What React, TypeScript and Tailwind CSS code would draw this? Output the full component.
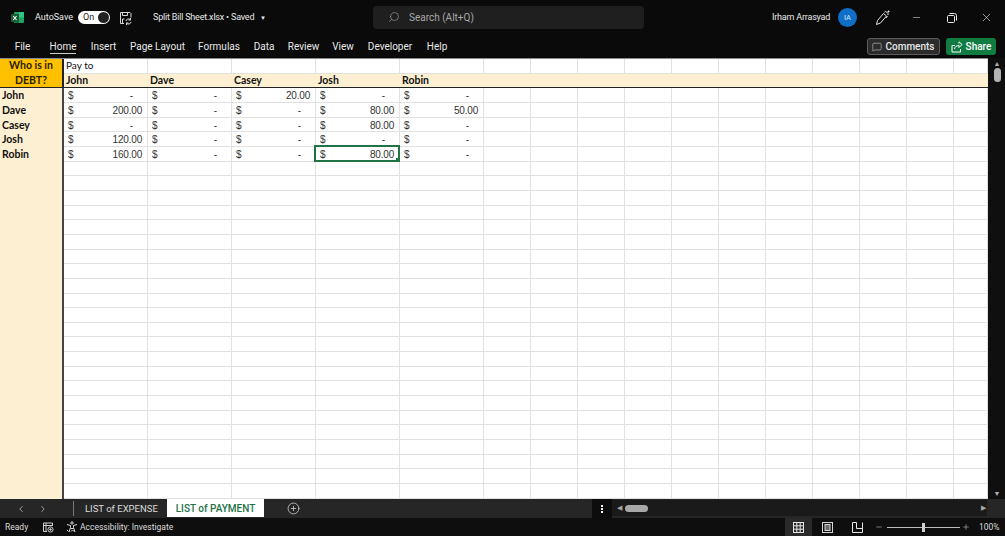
import React from 'react';
import { ChevronLeft, ChevronRight, Minus, MessageSquare, Plus, PlusCircle, Search, X } from 'lucide-react';

const uiFont = 'font-["Roboto","Noto_Sans",sans-serif]';
const sheetFont = 'font-["Lato",sans-serif]';

const tabs = [
  { label: 'File', width: 'w-[13px]' },
  { label: 'Home', width: 'w-[26px]', active: true },
  { label: 'Insert', width: 'w-[25px]' },
  { label: 'Page Layout', width: 'w-[53px]' },
  { label: 'Formulas', width: 'w-[40px]' },
  { label: 'Data', width: 'w-[20px]' },
  { label: 'Review', width: 'w-[29px]' },
  { label: 'View', width: 'w-[20px]' },
  { label: 'Developer', width: 'w-[44px]' },
  { label: 'Help', width: 'w-[20px]' },
];

const people = ['John', 'Dave', 'Casey', 'Josh', 'Robin'];

const payments: string[][] = [
  ['-', '-', '20.00', '-', '-'],
  ['200.00', '-', '-', '80.00', '50.00'],
  ['-', '-', '-', '80.00', '-'],
  ['120.00', '-', '-', '-', '-'],
  ['160.00', '-', '-', '80.00', '-'],
];

const cell = 'border-r border-b border-[#e1e1e1] min-w-0';
const extraCols = Array.from({ length: 11 });
const emptyRows = Array.from({ length: 23 });

function ExcelLogo() {
  return (
    <svg width="13" height="13" viewBox="0 0 13 13">
      <rect x="3" y="1" width="10" height="11" rx="1" fill="#21a366" />
      <rect x="8" y="1" width="5" height="5.5" fill="#33c481" />
      <rect x="3" y="6.5" width="5" height="5.5" fill="#107c41" />
      <rect x="0" y="3" width="8" height="8" rx="1" fill="#185c37" />
      <path d="M2.2 5 L5.6 9 M5.6 5 L2.2 9" stroke="#fff" strokeWidth="1.1" />
    </svg>
  );
}

function SaveIcon() {
  return (
    <svg width="13" height="14" viewBox="0 0 13 14" fill="none" stroke="#d8d8d8" strokeWidth="1">
      <path d="M5 12.5H1.5V1.5h9.5l1 1v4" />
      <path d="M3.5 1.5v3h5v-3M3.5 12v-4h2" />
      <path d="M7 10a2.5 2.5 0 0 1 4.5-1M12 11a2.5 2.5 0 0 1-4.5 1" />
      <path d="M11.5 7v2h-2M7.5 14v-2h2" />
    </svg>
  );
}

function PenIcon() {
  return (
    <svg width="16" height="16" viewBox="0 0 16 16" fill="none" stroke="#e6e6e6" strokeWidth="1">
      <path d="M1.5 14.5l1-4 6-7 3 2.5-6 7z" />
      <path d="M9.5 2.5l1-1.2 3 2.5-1 1.3M11 8l1.5-2" />
      <path d="M13.5 .5v2M12.5 1.5h2" />
    </svg>
  );
}

function RestoreIcon() {
  return (
    <svg width="10" height="10" viewBox="0 0 10 10" fill="none" stroke="#e8e8e8" strokeWidth="1">
      <rect x=".5" y="2.5" width="7" height="7" rx="1" />
      <path d="M2.5 .5h5a2 2 0 0 1 2 2v5" />
    </svg>
  );
}

function ShareIcon() {
  return (
    <svg width="12" height="12" viewBox="0 0 12 12" fill="none" stroke="#fff" strokeWidth="1">
      <path d="M4 4.5H1v6.5h8.5V8" />
      <path d="M3.5 8c.4-2.2 2.2-3.5 4.5-3.5V6.5L11 3.5 8 .8v1.8" />
    </svg>
  );
}

function MacroIcon() {
  return (
    <svg width="11" height="11" viewBox="0 0 11 11" fill="none" stroke="#cfcfcf" strokeWidth="1">
      <path d="M.5 1h9v3M.5 1v8.5H4M.5 3.5h9M3 1v8" />
      <circle cx="7.5" cy="7.5" r="2.6" />
      <circle cx="7.5" cy="7.5" r="0.8" fill="#cfcfcf" />
    </svg>
  );
}

function AccessibilityIcon() {
  return (
    <svg width="12" height="12" viewBox="0 0 12 12" fill="none" stroke="#dcdcdc" strokeWidth="1">
      <circle cx="6" cy="2" r="1.2" />
      <path d="M1 3.5l3.5 1v2L3 11M11 3.5l-3.5 1v2L9 11M4.5 7.5h3" />
      <path d="M1 9l1.5 1.5M5 10.5l1.5-1.5 1.5 1.5" />
    </svg>
  );
}

function GridViewIcon() {
  return (
    <svg width="11" height="11" viewBox="0 0 11 11" fill="none" stroke="#e6e6e6" strokeWidth="1">
      <rect x=".5" y=".5" width="10" height="10" />
      <path d="M3.8 .5v10M7.2 .5v10M.5 3.8h10M.5 7.2h10" />
    </svg>
  );
}

function PageViewIcon() {
  return (
    <svg width="11" height="11" viewBox="0 0 11 11" fill="none" stroke="#d6d6d6" strokeWidth="1">
      <rect x=".5" y=".5" width="10" height="10" />
      <rect x="3" y="2.5" width="5" height="6" fill="#6a6a6a" />
    </svg>
  );
}

function BreakViewIcon() {
  return (
    <svg width="11" height="11" viewBox="0 0 11 11" fill="none" stroke="#e6e6e6" strokeWidth="1">
      <path d="M.5 .5v10h10V.5M.5 .5h4v6h6" />
    </svg>
  );
}

function TitleBar() {
  return (
    <div className="h-[34px] flex items-center pl-[11px] pt-[1px] text-[#e8e8e8] text-[9px] shrink-0">
      <ExcelLogo />
      <span className="ml-[11px] w-[37px] whitespace-nowrap">AutoSave</span>
      <div className="ml-[6px] w-[32px] h-[13px] rounded-full bg-white flex items-center justify-between pl-[5px] pr-[1px] text-[#222] text-[9px]">
        <span>On</span>
        <span className="w-[11px] h-[11px] rounded-full bg-[#222]" />
      </div>
      <div className="ml-[9px] flex"><SaveIcon /></div>
      <span className="ml-[21px] w-[102px] whitespace-nowrap tracking-[-0.2px]">Split Bill Sheet.xlsx • Saved</span>
      <span className="ml-[5px] w-[6px] text-[6px]">▼</span>
      <div className="ml-[107px] w-[271px] h-[23px] -mt-[1px] rounded bg-[#1f1f1f] flex items-center pl-[15px] text-[#a8a8a8] text-[10px]">
        <Search size={12} strokeWidth={1.2} className="-scale-x-100" />
        <span className="ml-[9px]">Search (Alt+Q)</span>
      </div>
      <span className="ml-[128px] w-[59px] whitespace-nowrap tracking-[-0.2px]">Irham Arrasyad</span>
      <div className="ml-[7px] w-[19px] h-[19px] rounded-full bg-[#0f6fc6] flex items-center justify-center text-[7.5px] text-[#d8e8f8]">IA</div>
      <div className="ml-[18px] flex"><PenIcon /></div>
      <Minus size={11} strokeWidth={1.2} className="ml-[20px]" />
      <div className="ml-[25px] flex"><RestoreIcon /></div>
      <X size={13} strokeWidth={1.2} className="ml-[23px]" />
    </div>
  );
}

function Ribbon() {
  return (
    <div className="h-[24px] flex items-center pl-[16px] pr-[9px] text-[#e8e8e8] text-[10px] shrink-0">
      <div className="flex gap-[15px] h-full">
        {tabs.map((t, i) => (
          <div
            key={t.label}
            className={`${t.width} ${i === 1 ? 'ml-[6px] border-b border-[#cfcfcf]' : ''} h-[20px] pt-[6px] whitespace-nowrap flex justify-center leading-[14px]`}
          >
            {t.label}
          </div>
        ))}
      </div>
      <div className="ml-auto flex gap-[6px] mt-[1px] font-medium">
        <div className="w-[73px] h-[17px] rounded-[3px] bg-[#2b2b2b] border border-[#5c5c5c] flex items-center justify-center gap-[3px]">
          <MessageSquare size={10} strokeWidth={1.2} />
          <span>Comments</span>
        </div>
        <div className="w-[50px] h-[17px] rounded-[3px] bg-[#107c41] flex items-center justify-center gap-[3px] text-white">
          <ShareIcon />
          <span>Share</span>
        </div>
      </div>
    </div>
  );
}

function Grid() {
  return (
    <div className={`${sheetFont} flex-1 min-w-0 bg-white overflow-hidden border-t border-[#8a8a8a] grid grid-cols-[64px_repeat(5,84px)_repeat(10,47px)_34px] auto-rows-[14.67px] text-[10.5px] text-[#111]`}>
      {/* Who is in DEBT merged cell */}
      <div className="row-span-2 bg-[#ffc000] border-r-2 border-b border-[#222] flex items-center justify-center text-center font-bold leading-[15px] text-[#2b2000]">
        Who is in
        <br />
        DEBT?
      </div>
      <div className={`${cell} pl-[2px] leading-[13px] text-[10px]`}>Pay to</div>
      {Array.from({ length: 15 }).map((_, i) => (
        <div key={i} className={cell} />
      ))}

      {people.map((p) => (
        <div key={p} className="bg-[#fdf0d2] border-b border-[#222] pl-[2px] font-bold leading-[13px]">{p}</div>
      ))}
      {extraCols.map((_, i) => (
        <div key={i} className="bg-[#fdf0d2] border-b border-[#222]" />
      ))}

      {people.map((p, r) => (
        <React.Fragment key={p}>
          <div className="bg-[#fdf0d2] border-r-2 border-[#444] pl-[2px] font-bold leading-[15px]">{p}</div>
          {payments[r].map((v, c) => (
            <div key={c} className={`${cell} relative font-["Liberation_Sans",sans-serif] text-[10px] tracking-[-0.2px] leading-[15px] text-[#333] flex justify-between pl-[4px] ${v === '-' ? 'pr-[14px]' : 'pr-[5px]'}`}>
              <span>$</span>
              <span>{v}</span>
              {r === 4 && c === 3 && (
                <div className="absolute -left-[2px] -top-[2px] -right-[1px] -bottom-[1px] z-10 border-2 border-[#217346]">
                  <div className="absolute -right-[2px] -bottom-[2px] w-[4px] h-[4px] bg-[#217346]" />
                </div>
              )}
            </div>
          ))}
          {extraCols.map((_, i) => (
            <div key={i} className={cell} />
          ))}
        </React.Fragment>
      ))}

      {emptyRows.map((_, r) => (
        <React.Fragment key={r}>
          <div className="bg-[#fdf0d2] border-r-2 border-[#444]" />
          {Array.from({ length: 16 }).map((_, i) => (
            <div key={i} className={cell} />
          ))}
        </React.Fragment>
      ))}
    </div>
  );
}

function VScrollbar() {
  return (
    <div className="w-[17px] shrink-0 bg-[#0f0f0f] flex flex-col items-center pt-[2px] pb-[1px] pl-[1px]">
      <span className="text-[7px] leading-[8px] text-[#b0b0b0]">▲</span>
      <div className="w-[7px] h-[14px] rounded-full bg-[#b4b4b4]" />
      <span className="mt-auto text-[7px] leading-[8px] text-[#b0b0b0]">▼</span>
    </div>
  );
}

function SheetTabs() {
  return (
    <div className="h-[19px] bg-[#262626] flex text-[9.5px] text-[#dcdcdc] shrink-0">
      <div className="w-[73px] flex items-center pl-[16px] gap-[12px] text-[#bdbdbd]">
        <ChevronLeft size={10} strokeWidth={2} />
        <ChevronRight size={10} strokeWidth={2} />
      </div>
      <div className="w-px h-[15px] mt-[2px] bg-[#777]" />
      <span className="ml-[11px] w-[71px] leading-[19px] whitespace-nowrap">LIST of EXPENSE</span>
      <div className="ml-[11px] w-[97px] h-[18px] bg-white text-[#217346] text-[10px] font-medium flex items-center justify-center whitespace-nowrap">LIST of PAYMENT</div>
      <div className="ml-[23px] flex items-center">
        <PlusCircle size={13} strokeWidth={1.3} className="text-[#e6e6e6]" />
      </div>
      <div className="ml-[292px] w-[20px] bg-[#0d0d0d] flex flex-col items-center justify-center gap-[1px]">
        <span className="w-[2px] h-[2px] bg-white" />
        <span className="w-[2px] h-[2px] bg-white" />
        <span className="w-[2px] h-[2px] bg-white" />
      </div>
      <div className="w-[375px] h-[16px] mt-[1px] flex items-center pl-[5px] pr-[1px] text-[#a6a6a6] bg-[#1a1a1a]">
        <span className="text-[7px] leading-none">◀</span>
        <div className="ml-[3px] w-[23px] h-[7px] rounded-full bg-[#a8a8a8]" />
        <span className="ml-auto text-[7px] leading-none">▶</span>
      </div>
    </div>
  );
}

function StatusBar() {
  return (
    <div className="h-[18px] bg-[#0e0e0e] flex items-center pl-[5px] pr-[6px] text-[8.5px] text-[#dcdcdc] shrink-0">
      <span className="w-[23px]">Ready</span>
      <div className="ml-[15px] flex"><MacroIcon /></div>
      <div className="ml-[12px] flex"><AccessibilityIcon /></div>
      <span className="ml-[2px] whitespace-nowrap">Accessibility: Investigate</span>
      <div className="ml-auto w-[27px] h-full bg-[#2a2a2a] flex items-center justify-center"><GridViewIcon /></div>
      <div className="ml-[10px] flex"><PageViewIcon /></div>
      <div className="ml-[19px] flex"><BreakViewIcon /></div>
      <Minus size={8} strokeWidth={1.5} className="ml-[12px]" />
      <div className="relative ml-[4px] w-[73px] h-px bg-[#bdbdbd]">
        <div className="absolute left-[35px] -top-[4px] w-[3px] h-[9px] bg-[#d0d0d0]" />
      </div>
      <Plus size={8} strokeWidth={1.5} className="ml-[2px]" />
      <span className="ml-[9px] w-[20px] whitespace-nowrap">100%</span>
    </div>
  );
}

export default function App() {
  return (
    <div className={`${uiFont} w-[1005px] h-[536px] bg-[#0a0a0a] flex flex-col overflow-hidden`}>
      <TitleBar />
      <Ribbon />
      <div className="h-[441px] flex shrink-0">
        <Grid />
        <VScrollbar />
      </div>
      <SheetTabs />
      <StatusBar />
    </div>
  );
}
